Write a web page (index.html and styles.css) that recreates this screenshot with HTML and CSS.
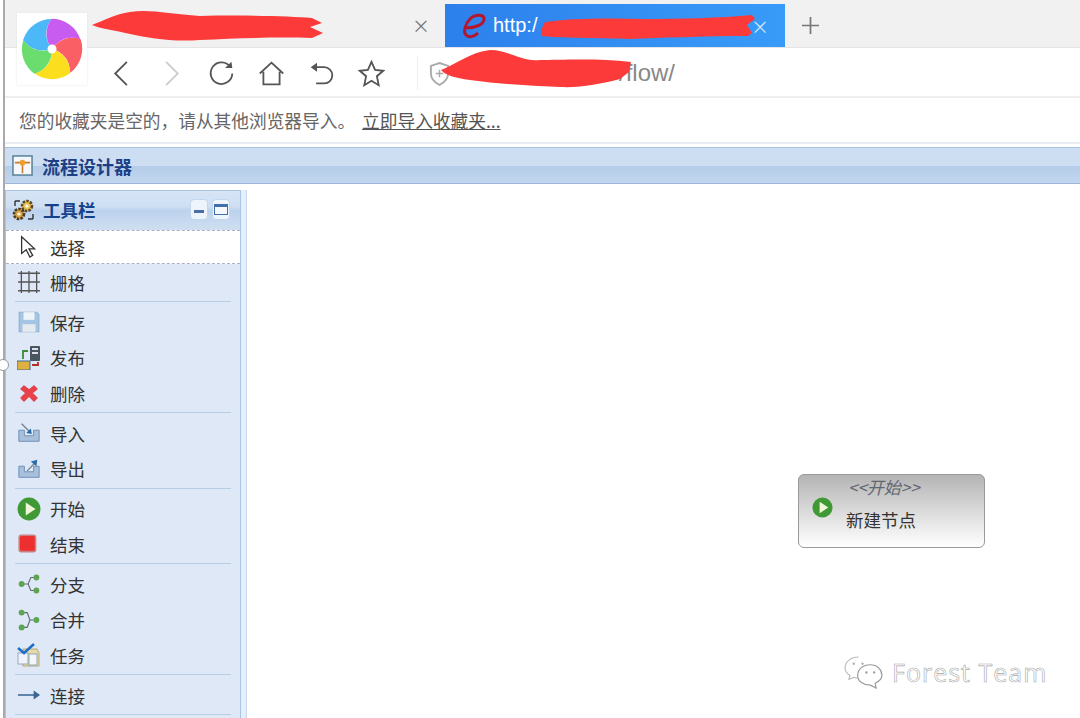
FILE: index.html
```html
<!DOCTYPE html>
<html lang="zh-CN">
<head>
    <meta charset="UTF-8">
    <title>流程设计器</title>
    <link rel="stylesheet" href="styles.css">
</head>
<body>

    <div class="frame">
        <div class="tabstrip">
            <div class="tab">
                <span class="tab-close">×</span>
            </div>
            <div class="tab-active">
                <svg class="tab-ie" viewBox="0 0 26 26"><path d="M5 15 C13 15 23 12 23 6 C23 1 14 1 9 6 C4 11 2 19 5 22 C8 25 13 24 17 20" fill="none" stroke="#b5162e" stroke-width="3"/></svg>
                <span class="tab-url">http:/</span>
                <span class="tab-close-active">×</span>
            </div>
            <svg class="tab-new" viewBox="0 0 20 20"><path d="M10 1 V19 M1 10 H19" stroke="#777" stroke-width="1.8"/></svg>
        </div>

        <div class="toolbar">
            <div class="nav-btn"><svg viewBox="0 0 30 30"><path d="M21 2 L8 15 L21 28" fill="none" stroke="#555" stroke-width="2"/></svg></div>
            <div class="nav-btn"><svg viewBox="0 0 30 30"><path d="M9 2 L22 15 L9 28" fill="none" stroke="#ccc" stroke-width="2"/></svg></div>
            <div class="nav-btn"><svg viewBox="0 0 30 30"><path d="M25 8 A12 12 0 1 0 27 15" fill="none" stroke="#555" stroke-width="2"/><path d="M19 9 L27 9 L26 2 Z" fill="#555"/></svg></div>
            <div class="nav-btn"><svg viewBox="0 0 30 30"><path d="M2 15 L15 3 L28 15 M6 13 V27 H24 V13" fill="none" stroke="#555" stroke-width="2"/></svg></div>
            <div class="nav-btn"><svg viewBox="0 0 30 30"><path d="M7 8 H18 A9 9 0 0 1 18 26 H9" fill="none" stroke="#555" stroke-width="2"/><path d="M10 3 L3 8 L10 13 Z" fill="#555"/></svg></div>
            <div class="nav-btn"><svg viewBox="0 0 30 30"><path d="M15 2 L19 11 L28 12 L21 18 L23 28 L15 23 L7 28 L9 18 L2 12 L11 11 Z" fill="none" stroke="#555" stroke-width="2"/></svg></div>
            <div class="address">
                <svg class="shield" viewBox="0 0 22 26"><path d="M11 2 L20 5 V13 C20 19 15 23 11 25 C7 23 2 19 2 13 V5 Z" fill="none" stroke="#aaa" stroke-width="2"/><path d="M11 9 V17 M7 13 H15" stroke="#aaa" stroke-width="1.6"/></svg>
                <span class="address-text">/flow/</span>
            </div>
        </div>

        <div class="favbar">
            <span>您的收藏夹是空的，请从其他浏览器导入。</span>
            <a class="fav-link">立即导入收藏夹...</a>
        </div>

        <div class="designer">
            <div class="designer-head">
                <svg class="designer-icon" viewBox="0 0 22 22">
                    <rect x="1" y="1" width="20" height="20" fill="#f4f7fb" stroke="#5d8398" stroke-width="1.6"/>
                    <path d="M3 8 H19 M11 8 V19" stroke="#c9792a" stroke-width="1.6"/>
                    <circle cx="11" cy="8" r="3" fill="#f0a030"/>
                </svg>
                <span>流程设计器</span>
            </div>

            <div class="designer-body">
                <div class="sidebar">
                    <div class="sidebar-head">
                        <svg class="gears" viewBox="0 0 24 24">
                            <circle cx="15" cy="8" r="5" fill="#e8c050" stroke="#5a4a28" stroke-width="2.6" stroke-dasharray="2.5 1.2"/>
                            <circle cx="15" cy="8" r="1.6" fill="#fff"/>
                            <circle cx="7" cy="16" r="5" fill="#d8a040" stroke="#4a3a20" stroke-width="2.6" stroke-dasharray="2.5 1.2"/>
                            <circle cx="7" cy="16" r="1.6" fill="#fff"/>
                            <path d="M3 3 L8 3 M3 3 L3 8 M21 21 L16 21 M21 21 L21 16" stroke="#333" stroke-width="1.4"/>
                        </svg>
                        <span class="sidebar-title">工具栏</span>
                        <div class="head-btns">
                            <span class="head-btn"><i class="glyph-min"></i></span>
                            <span class="head-btn"><i class="glyph-max"></i></span>
                        </div>
                    </div>

                    <div class="tool tool-selected">
                        <svg viewBox="0 0 22 26"><path d="M3 2 V20 L8 16 L12 24 L15 22 L11 15 L17 15 Z" fill="#fff" stroke="#333" stroke-width="1.4"/></svg>
                        <span>选择</span>
                    </div>
                    <div class="tool">
                        <svg viewBox="0 0 22 22"><path d="M1 3 H21 M1 11 H21 M1 19 H21 M4 1 V21 M11 1 V21 M18 1 V21" stroke="#555" stroke-width="1.2" fill="none"/></svg>
                        <span>栅格</span>
                    </div>
                    <div class="tool-sep"></div>
                    <div class="tool">
                        <svg viewBox="0 0 22 22"><path d="M2 2 H18 L20 4 V20 H2 Z" fill="#a4c6e4" stroke="#8fb2d2"/><rect x="6" y="2" width="10" height="7" fill="#eef4fa"/><rect x="5" y="13" width="12" height="7" fill="#e4eaee"/></svg>
                        <span>保存</span>
                    </div>
                    <div class="tool">
                        <svg viewBox="0 0 24 24"><rect x="13" y="0" width="10" height="15" rx="1" fill="#4a5560"/><rect x="15" y="2" width="6" height="2" fill="#dde"/><rect x="15" y="6" width="6" height="2" fill="#dde"/><rect x="0" y="15" width="13" height="9" fill="#e0b040" stroke="#3a6a9a"/><path d="M11 5 H6 V13" fill="none" stroke="#3a8a3a" stroke-width="1.8"/><path d="M15 19 H21 V16" fill="none" stroke="#b03020" stroke-width="1.8"/></svg>
                        <span>发布</span>
                    </div>
                    <div class="tool">
                        <svg viewBox="0 0 24 24"><path d="M7 5 L12 9 L17 5 L20 8 L15 12 L20 17 L17 20 L12 15 L7 20 L4 17 L9 12 L4 8 Z" fill="#e8414a" stroke="#e4404a" stroke-width="1.4" stroke-linejoin="round"/></svg>
                        <span>删除</span>
                    </div>
                    <div class="tool-sep"></div>
                    <div class="tool">
                        <svg viewBox="0 0 26 22"><path d="M2 8 H8 V14 H18 V8 H24 V20 H2 Z" fill="#a9c0dc" stroke="#6a8cb4"/><path d="M5 1 L14 10" stroke="#6a7f95" stroke-width="1.4"/><path d="M16 12 L10 11 L15 6 Z" fill="#2a6aa8"/></svg>
                        <span>导入</span>
                    </div>
                    <div class="tool">
                        <svg viewBox="0 0 26 22"><path d="M2 8 H8 V14 H18 V8 H24 V20 H2 Z" fill="#a9c0dc" stroke="#6a8cb4"/><path d="M11 13 L20 4" stroke="#6a7f95" stroke-width="1.4"/><path d="M22 1 L21 8 L15 3 Z" fill="#2a6aa8"/></svg>
                        <span>导出</span>
                    </div>
                    <div class="tool-sep"></div>
                    <div class="tool">
                        <svg viewBox="0 0 22 22"><circle cx="11" cy="11" r="10.5" fill="#3f9a35"/><path d="M8 5 L17 11 L8 17 Z" fill="#f2f6d8"/></svg>
                        <span>开始</span>
                    </div>
                    <div class="tool">
                        <svg viewBox="0 0 22 22"><rect x="2" y="3" width="15" height="15" rx="2" fill="#ee2f2f" stroke="#c98080" stroke-width="1.4"/></svg>
                        <span>结束</span>
                    </div>
                    <div class="tool-sep"></div>
                    <div class="tool">
                        <svg viewBox="0 0 26 22"><path d="M6 11 H12 L15 4 H19 M12 11 L15 18 H19" stroke="#667" stroke-width="1.2" fill="none"/><circle cx="5" cy="11" r="3.2" fill="#5ca552"/><circle cx="21" cy="4" r="3.2" fill="#5ca552"/><circle cx="21" cy="18" r="3.2" fill="#5ca552"/></svg>
                        <span>分支</span>
                    </div>
                    <div class="tool">
                        <svg viewBox="0 0 26 22"><path d="M20 11 H14 L11 3 H6 M14 11 L11 19 H6" stroke="#667" stroke-width="1.2" fill="none"/><circle cx="21" cy="11" r="3.2" fill="#5ca552"/><circle cx="5" cy="3" r="3.2" fill="#5ca552"/><circle cx="5" cy="19" r="3.2" fill="#5ca552"/></svg>
                        <span>合并</span>
                    </div>
                    <div class="tool">
                        <svg viewBox="0 0 24 24"><path d="M6 6 H20 L22 10 V23 H6 Z" fill="#e8d9a8" stroke="#b8a878"/><rect x="1" y="10" width="10" height="11" fill="#f0f4fa" stroke="#9ab"/><rect x="12" y="11" width="8" height="11" fill="#f4f6fa" stroke="#8ab"/><path d="M1 5 L7 10 L17 1" fill="none" stroke="#1f6fc8" stroke-width="2.6"/></svg>
                        <span>任务</span>
                    </div>
                    <div class="tool-sep"></div>
                    <div class="tool">
                        <svg viewBox="0 0 26 22"><path d="M1 11 H20" stroke="#46709c" stroke-width="1.8"/><path d="M18 6 L25 11 L18 16 Z" fill="#3a6494"/></svg>
                        <span>连接</span>
                    </div>
                    <div class="tool-sep"></div>
                </div>

                <div class="splitter"></div>

                <div class="canvas">
                    <div class="node">
                        <svg class="node-icon" viewBox="0 0 22 22"><circle cx="11" cy="11" r="10.5" fill="#3f9a35"/><path d="M8 5 L17 11 L8 17 Z" fill="#f2f6d8"/></svg>
                        <div class="node-text">
                            <div class="node-type">&lt;&lt;开始&gt;&gt;</div>
                            <div class="node-name">新建节点</div>
                        </div>
                    </div>
                    <div class="watermark">
                        <svg class="wechat" viewBox="0 0 40 34">
                            <path d="M15 1 C7 1 1 6 1 12 C1 16 3 18 6 20 L5 24 L10 22 C12 23 14 23 16 23" fill="#fff" stroke="#bbb" stroke-width="1.2"/>
                            <path d="M27 9 C19 9 14 14 14 20 C14 26 20 30 27 30 L33 33 L32 28 C36 26 39 23 39 20 C39 14 34 9 27 9 Z" fill="#fff" stroke="#999" stroke-width="1.2"/>
                            <circle cx="10" cy="8" r="1.2" fill="#aaa"/><circle cx="19" cy="8" r="1.2" fill="#aaa"/>
                            <circle cx="23" cy="17" r="1.2" fill="#999"/><circle cx="31" cy="17" r="1.2" fill="#999"/>
                        </svg>
                        <span>Forest Team</span>
                    </div>
                </div>
            </div>
        </div>

        <div class="logo">
            <svg viewBox="-35 -36 70 72">
                <path transform="rotate(-65)" d="M0 0 C-8 -8 -10 -20 -4 -30 A30 30 0 0 1 27 -13 C15 -16 5 -10 0 0 Z" fill="#4db8f8"/>
                <path transform="rotate(7)" d="M0 0 C-8 -8 -10 -20 -4 -30 A30 30 0 0 1 27 -13 C15 -16 5 -10 0 0 Z" fill="#c95cf0"/>
                <path transform="rotate(79)" d="M0 0 C-8 -8 -10 -20 -4 -30 A30 30 0 0 1 27 -13 C15 -16 5 -10 0 0 Z" fill="#fb5f66"/>
                <path transform="rotate(151)" d="M0 0 C-8 -8 -10 -20 -4 -30 A30 30 0 0 1 27 -13 C15 -16 5 -10 0 0 Z" fill="#fbdf1e"/>
                <path transform="rotate(223)" d="M0 0 C-8 -8 -10 -20 -4 -30 A30 30 0 0 1 27 -13 C15 -16 5 -10 0 0 Z" fill="#6bdc6e"/>
                <circle r="4.5" fill="#fff"/>
            </svg>
        </div>

        <svg class="redactions" viewBox="0 0 1080 718">
            <path d="M92 25 C105 20 115 14 130 12 C150 9 170 14 200 16 C240 15 290 16 312 18 L322 23 L310 27 L323 33 L312 38 C280 37 240 38 200 40 C170 42 150 38 130 34 C115 30 100 29 92 25 Z" fill="#fd3a3a"/>
            <path d="M541 30 L545 22 C570 18 610 18 640 19 C680 19 720 18 752 15 L755 19 L747 25 L752 33 L748 36 C700 36 660 38 630 39 C600 38 560 38 541 36 Z" fill="#fd3a3a"/>
            <path d="M441 70 C455 65 470 52 490 50 C510 50 520 62 540 60 C560 60 600 58 631 62 L629 72 L620 79 C600 84 580 88 560 87 C530 86 500 84 470 80 C455 78 445 75 441 70 Z" fill="#fd3a3a"/>
        </svg>

        <span class="edge-handle"></span>
    </div>

</body>
</html>
```

FILE: styles.css
```css
html, body {
    margin: 0;
    height: 100%;
    background: #fff;
    overflow: hidden;
}
body {
    font-family: "Noto Sans CJK SC", "Liberation Sans", sans-serif;
}
.frame {
    margin-left: 3px;
    border-left: 2px solid #aaa;
    height: 718px;
    overflow: hidden;
}

/* tabs */
.tabstrip {
    display: flex;
    height: 47px;
    background: #f1f1f1;
    border-bottom: 1px solid #e4e4e4;
}
.tab {
    width: 440px;
    display: flex;
    align-items: center;
    justify-content: flex-end;
    padding-right: 17px;
    box-sizing: border-box;
}
.tab-close {
    font-size: 18px;
    color: #777;
    margin-right: -2px;
    padding-top: 3px;
}
.tab-active {
    width: 340px;
    margin-top: 4px;
    display: flex;
    align-items: center;
    padding: 0 16px;
    box-sizing: border-box;
    background: linear-gradient(90deg, #2d80ec, #389bf8);
    color: #fff;
}
.tab-ie {
    width: 26px;
    height: 26px;
    margin-right: 6px;
}
.tab-url {
    font-family: "Liberation Sans", sans-serif;
    font-size: 20px;
    flex: 1;
}
.tab-close-active {
    font-size: 18px;
    color: #cfe4fb;
    margin-right: 0;
}
.tab-new {
    width: 19px;
    height: 19px;
    margin: 16px 0 0 16px;
}

/* toolbar */
.toolbar {
    display: flex;
    align-items: center;
    height: 50px;
    padding: 2px 0 0 91px;
    border-bottom: 2px solid #eee;
    box-sizing: border-box;
}
.nav-btn {
    width: 50px;
    display: flex;
    justify-content: center;
}
.nav-btn svg {
    width: 27px;
    height: 27px;
}
.address {
    display: flex;
    align-items: center;
    margin-left: 21px;
    padding-left: 11px;
    height: 34px;
    border-left: 1px solid #eee;
    flex: 1;
}
.shield {
    width: 21px;
    height: 25px;
}
.address-text {
    margin-left: 169px;
    font-family: "Liberation Sans", sans-serif;
    font-size: 24px;
    color: #888;
}

/* favorites */
.favbar {
    display: flex;
    align-items: center;
    gap: 7px;
    height: 46px;
    padding: 0 14px;
    border-bottom: 2px solid #e8edf3;
    box-sizing: border-box;
    font-size: 17.7px;
    color: #666;
}
.fav-link {
    color: #555;
    text-decoration: underline;
}

/* designer */
.designer {
    height: 573px;
    padding-top: 3px;
    box-sizing: border-box;
}
.designer-head {
    display: flex;
    align-items: center;
    height: 37px;
    padding-left: 7px;
    border-top: 1px solid #a9c0de;
    border-bottom: 1px solid #a3b5dd;
    box-sizing: border-box;
    background: linear-gradient(#cddef2 0, #cddef2 52%, #b5cdea 52%, #c2d6ee 100%);
    font-size: 18px;
    font-weight: bold;
    color: #1c3f86;
}
.designer-icon {
    width: 21px;
    height: 21px;
    margin-right: 9px;
}
.designer-body {
    display: flex;
    height: 532px;
    margin-top: 6px;
}
.sidebar {
    width: 236px;
    flex: none;
    border: 1px solid #a8c4e4;
    border-bottom: none;
    box-sizing: border-box;
    background: #dfe8f6;
}
.sidebar-head {
    display: flex;
    align-items: center;
    height: 39px;
    padding: 0 0 2px 6px;
    box-sizing: border-box;
    background: linear-gradient(#d6e4f5, #cfdff3 40%, #bcd2ee 50%, #cfdff2);
}
.gears {
    width: 24px;
    height: 24px;
    margin-right: 7px;
}
.sidebar-title {
    font-size: 17.5px;
    font-weight: bold;
    color: #15428b;
}
.head-btns {
    display: flex;
    gap: 4px;
    margin-left: auto;
    margin-right: 10px;
}
.head-btn {
    display: flex;
    align-items: center;
    justify-content: center;
    width: 18px;
    height: 21px;
    border-radius: 4px;
    background: #eef4fc;
    border: 1px solid #c4d6ec;
    box-sizing: border-box;
}
.glyph-min {
    width: 10px;
    height: 3px;
    margin-top: 4px;
    background: #4a6ea8;
}
.glyph-max {
    width: 14px;
    height: 11px;
    border: 1.5px solid #3f6fb0;
    border-top-width: 3px;
    box-sizing: border-box;
    background: #f4f8fd;
}
.tool {
    display: flex;
    align-items: center;
    height: 35.5px;
    padding-left: 11px;
    font-size: 17.5px;
    color: #333;
}
.tool svg {
    width: 24px;
    height: 24px;
    margin-right: 9px;
    flex: none;
}
.tool-selected {
    height: 34px;
    background: #fff;
    border-top: 1.5px dashed #a8b2c0;
    border-bottom: 1.5px dashed #a8b2c0;
    box-sizing: border-box;
    margin-bottom: 0.5px;
}
.tool-sep {
    height: 1px;
    margin: 1px 9px 2.5px 9px;
    background: #b6cde6;
}
.splitter {
    width: 5px;
    flex: none;
    background: #e6eef8;
}
.canvas {
    position: relative;
    flex: 1;
    background: #fff;
    border-left: 1px solid #c9d8ec;
}

/* node on the canvas */
.node {
    position: absolute;
    left: 551px;
    top: 284px;
    width: 187px;
    height: 74px;
    display: flex;
    align-items: center;
    box-sizing: border-box;
    border: 1.5px solid #999;
    border-radius: 6px;
    background: linear-gradient(#b4b4b4, #dedede 55%, #fff);
}
.node-icon {
    width: 21px;
    height: 21px;
    margin: 0 13px 8px 13px;
}
.node-text {
    padding-bottom: 6px;
}
.node-type {
    padding-left: 2px;
    font-size: 17px;
    font-style: italic;
    color: #5f6670;
    line-height: 24px;
}
.node-name {
    font-size: 17.5px;
    color: #333;
    line-height: 42px;
}
.watermark {
    position: absolute;
    left: 597px;
    top: 465px;
    display: flex;
    align-items: center;
    gap: 9px;
    font-family: "Open Sans", sans-serif;
    font-size: 25px;
    letter-spacing: 1px;
    color: #fff;
    -webkit-text-stroke: 0.6px #aaa;
}
.wechat {
    width: 39px;
    height: 33px;
}

/* things over the chrome */
.logo {
    position: absolute;
    left: 17px;
    top: 13px;
    width: 70px;
    height: 72px;
    background: #fff;
    box-shadow: 0 0 2px #e4e4e4;
}
.logo svg {
    width: 100%;
    height: 100%;
}
.redactions {
    position: absolute;
    left: 0;
    top: 0;
    width: 1080px;
    height: 718px;
    pointer-events: none;
}
.edge-handle {
    position: absolute;
    left: -3px;
    top: 359px;
    width: 10px;
    height: 10px;
    border-radius: 50%;
    background: #fff;
    border: 1px solid #999;
}
```
